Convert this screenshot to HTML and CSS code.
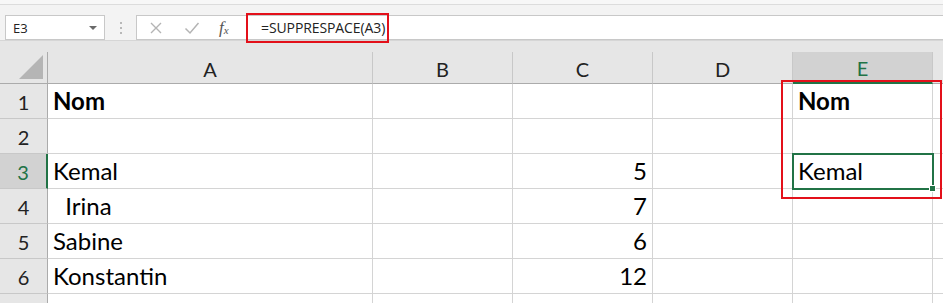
FILE: index.html
```html
<!DOCTYPE html>
<html lang="fr">
<head>
<meta charset="utf-8">
<title>Excel - SUPPRESPACE</title>
<link rel="stylesheet" href="styles.css">
</head>
<body>
<div class="app">
  <div class="titlebar"></div>
  <div class="fbar">
    <div class="namebox">
      <span class="nb-text">E3</span>
      <span class="nb-arrow"></span>
    </div>
    <div class="grip"><i></i><i></i><i></i></div>
    <div class="formula">
      <div class="ficons">
        <svg class="ico" width="14" height="14" viewBox="0 0 14 14"><path d="M2 2 L12 12 M12 2 L2 12" stroke="#b4b4b4" stroke-width="1.4" fill="none"/></svg>
        <svg class="ico" width="16" height="14" viewBox="0 0 16 14"><path d="M1.5 7.5 L6 12 L14.5 2" stroke="#b4b4b4" stroke-width="1.5" fill="none"/></svg>
        <span class="fx">f<sub>x</sub></span>
      </div>
      <div class="ftext">=SUPPRESPACE(A3)</div>
    </div>
    <div class="redbox-formula"></div>
  </div>
  <div class="sheet">
    <div class="grid">
      <div class="corner-top"></div>
      <div class="corner"><span class="tri"></span></div>
      <div class="ch">A</div>
      <div class="ch">B</div>
      <div class="ch">C</div>
      <div class="ch">D</div>
      <div class="ch sel">E</div>
      <div class="ch last"></div>

      <div class="rh">1</div>
      <div class="c b">Nom</div><div class="c"></div><div class="c"></div><div class="c"></div><div class="c b">Nom</div><div class="c last"></div>

      <div class="rh">2</div>
      <div class="c"></div><div class="c"></div><div class="c"></div><div class="c"></div><div class="c"></div><div class="c last"></div>

      <div class="rh sel">3</div>
      <div class="c">Kemal</div><div class="c"></div><div class="c num">5</div><div class="c"></div><div class="c active">Kemal<span class="handle"></span></div><div class="c last"></div>

      <div class="rh">4</div>
      <div class="c pre">  Irina</div><div class="c"></div><div class="c num">7</div><div class="c"></div><div class="c"></div><div class="c last"></div>

      <div class="rh">5</div>
      <div class="c">Sabine</div><div class="c"></div><div class="c num">6</div><div class="c"></div><div class="c"></div><div class="c last"></div>

      <div class="rh">6</div>
      <div class="c">Konstantin</div><div class="c"></div><div class="c num">12</div><div class="c"></div><div class="c"></div><div class="c last"></div>

      <div class="rh"></div>
      <div class="c"></div><div class="c"></div><div class="c"></div><div class="c"></div><div class="c"></div><div class="c last"></div>
    </div>
    <div class="redbox-cell"></div>
  </div>
</div>
</body>
</html>
```

FILE: styles.css
```css
html, body {
  margin: 0;
  padding: 0;
  background: #ffffff;
  overflow: hidden;
}
.app {
  width: 943px;
  height: 303px;
  overflow: hidden;
  position: relative;
  font-family: "Lato", "Open Sans", sans-serif;
  color: #000;
}
.titlebar {
  height: 4px;
  background: #f7f7f7;
  border-bottom: 1px solid #dcdcdc;
}
.fbar {
  position: relative;
  z-index: 5;
  height: 36px;
  background: #f3f3f3;
  display: flex;
  align-items: flex-start;
  padding-top: 10px;
  box-sizing: border-box;
  border-bottom: 1px solid #d6d6d6;
}
.namebox {
  margin-left: 5px;
  width: 100px;
  height: 25px;
  box-sizing: border-box;
  background: #fff;
  border: 1px solid #c8c8c8;
  display: flex;
  align-items: center;
  justify-content: space-between;
  padding: 0 7px 0 7px;
}
.nb-text {
  font-family: "Open Sans", sans-serif;
  font-size: 13px;
  color: #222;
}
.nb-arrow {
  width: 0;
  height: 0;
  border-left: 4px solid transparent;
  border-right: 4px solid transparent;
  border-top: 4px solid #6a6a6a;
}
.grip {
  width: 31px;
  height: 25px;
  display: flex;
  flex-direction: column;
  align-items: center;
  justify-content: center;
  gap: 3px;
}
.grip i {
  display: block;
  width: 2px;
  height: 2px;
  background: #b8b8b8;
}
.formula {
  flex: 1;
  height: 25px;
  box-sizing: border-box;
  background: #fff;
  border: 1px solid #c8c8c8;
  border-right: none;
  display: flex;
  align-items: center;
}
.ficons {
  width: 110px;
  display: flex;
  align-items: center;
  padding-left: 12px;
  box-sizing: border-box;
}
.ico {
  display: block;
}
.ficons .ico:first-child {
  margin-right: 21px;
}
.ficons .ico:nth-child(2) {
  margin-right: 19px;
}
.fx {
  font-family: "Liberation Serif", serif;
  font-style: italic;
  font-size: 17px;
  color: #555;
  line-height: 1;
}
.fx sub {
  font-size: 11px;
  vertical-align: -1px;
}
.ftext {
  padding-left: 14px;
  font-family: "Open Sans", sans-serif;
  font-size: 14px;
  color: #222;
  letter-spacing: -0.1px;
}
.redbox-formula {
  position: absolute;
  left: 246px;
  top: 8px;
  width: 143px;
  height: 30px;
  box-sizing: border-box;
  border: 2px solid #e3101a;
}
.sheet {
  position: relative;
}
.grid {
  display: grid;
  grid-template-columns: 48px 325px 140px 140px 140px 140px 10px;
  grid-template-rows: 11px 32px repeat(7, 35px);
}
.corner-top {
  grid-column: 1 / -1;
  background: #e6e6e6;
}
.corner {
  background: #e6e6e6;
  border-right: 1px solid #ababab;
  border-bottom: 1px solid #ababab;
  position: relative;
}
.tri {
  position: absolute;
  right: 4px;
  bottom: 4px;
  width: 0;
  height: 0;
  border-left: 24px solid transparent;
  border-bottom: 24px solid #b5b5b5;
}
.ch {
  background: #e6e6e6;
  border-right: 1px solid #c8c8c8;
  border-bottom: 1px solid #ababab;
  display: flex;
  align-items: center;
  justify-content: center;
  font-size: 20px;
  color: #222;
  padding-top: 2px;
  box-sizing: border-box;
}
.ch.sel {
  background: #d2d2d2;
  color: #217346;
  border-bottom: 2px solid #217346;
}
.ch.last {
  border-right: none;
}
.rh {
  background: #e6e6e6;
  border-right: 1px solid #ababab;
  border-bottom: 1px solid #c8c8c8;
  display: flex;
  align-items: center;
  justify-content: center;
  font-size: 20px;
  color: #222;
  padding-top: 2px;
  box-sizing: border-box;
}
.rh.sel {
  background: #d2d2d2;
  color: #217346;
  border-right: 2px solid #217346;
}
.c {
  border-right: 1px solid #d4d4d4;
  border-bottom: 1px solid #d4d4d4;
  font-size: 24px;
  line-height: 1;
  display: flex;
  align-items: flex-end;
  padding: 0 5px 5px 5px;
  box-sizing: border-box;
  white-space: nowrap;
  position: relative;
}
.c.last {
  border-right: none;
}
.c.b {
  font-weight: 700;
}
.c.pre {
  white-space: pre;
}
.c.num {
  justify-content: flex-end;
}
.c.active {
  outline: 2px solid #217346;
  outline-offset: -1px;
  z-index: 2;
}
.handle {
  position: absolute;
  right: -4px;
  bottom: -4px;
  width: 5px;
  height: 5px;
  background: #217346;
  border: 1px solid #fff;
}
.redbox-cell {
  position: absolute;
  left: 781px;
  top: 39px;
  width: 161px;
  height: 119px;
  box-sizing: border-box;
  border: 2px solid #e3101a;
  z-index: 3;
}
```
